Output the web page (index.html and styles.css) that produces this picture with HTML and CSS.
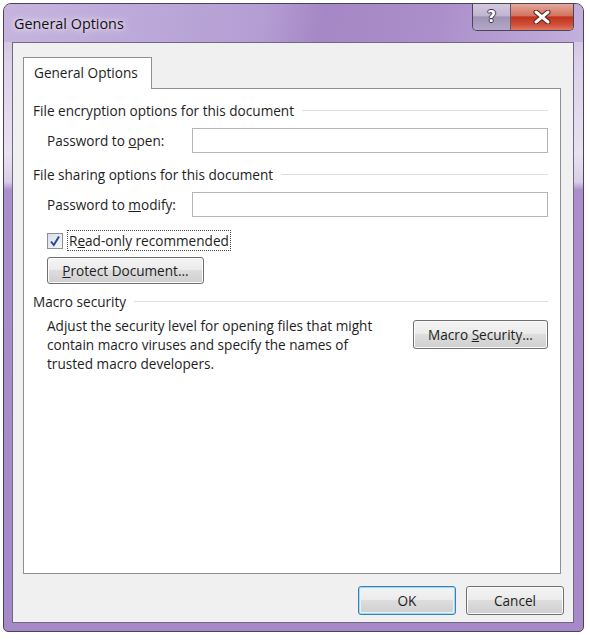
FILE: index.html
```html
<!DOCTYPE html>
<html lang="en">
<head>
    <meta charset="UTF-8">
    <title>General Options</title>
    <link rel="stylesheet" href="styles.css">
</head>
<body>
    <div class="window">
        <div class="titlebar">
            <span class="title">General Options</span>
            <div class="caption-buttons">
                <span class="cap-btn help-btn">?</span>
                <span class="cap-btn close-btn">
                    <svg width="18" height="14" viewBox="0 0 18 14">
                        <path d="M3 2 L15 12 M15 2 L3 12" stroke="#5a1a14" stroke-width="5" stroke-linecap="round"/>
                        <path d="M3 2 L15 12 M15 2 L3 12" stroke="#ffffff" stroke-width="3" stroke-linecap="round"/>
                    </svg>
                </span>
            </div>
        </div>
        <div class="client">
            <div class="tabs">
                <div class="tab">General Options</div>
            </div>
            <div class="panel">
                <div class="group-title"><span>File encryption options for this document</span></div>
                <div class="field">
                    <label class="field-label">Password to <u>o</u>pen:</label>
                    <div class="text-input"></div>
                </div>

                <div class="group-title second"><span>File sharing options for this document</span></div>
                <div class="field">
                    <label class="field-label">Password to <u>m</u>odify:</label>
                    <div class="text-input"></div>
                </div>
                <div class="check-row">
                    <span class="checkbox">
                        <svg width="12" height="12" viewBox="0 0 12 12">
                            <path d="M2 6.5 L4.8 10 L10 1.5" fill="none" stroke="#2a4a9c" stroke-width="2"/>
                        </svg>
                    </span>
                    <span class="check-label">R<u>e</u>ad-only recommended</span>
                </div>
                <button class="btn protect-btn"><u>P</u>rotect Document...</button>

                <div class="group-title third"><span>Macro security</span></div>
                <div class="macro-row">
                    <p class="macro-text">Adjust the security level for opening files that might<br>contain macro viruses and specify the names of<br>trusted macro developers.</p>
                    <button class="btn macro-btn">Macro <u>S</u>ecurity...</button>
                </div>
            </div>
            <div class="footer">
                <button class="btn ok-btn">OK</button>
                <button class="btn">Cancel</button>
            </div>
        </div>
    </div>
</body>
</html>
```

FILE: styles.css
```css
* {
    box-sizing: border-box;
}

body {
    margin: 0;
    padding: 3px;
    background: #ffffff;
    font-family: "Open Sans", "Noto Sans", sans-serif;
    font-size: 13.6px;
    color: #1e1e1e;
}

.window {
    width: 581px;
    height: 629px;
    border: 1px solid #474556;
    border-radius: 8px 8px 5px 5px;
    background: linear-gradient(to bottom, #c7b6df 0, #dcd1ea 60px, #e8e1f1 150px, #d9cde8 178px, #aa8fcc 186px, #a689c8 100%);
    display: flex;
    flex-direction: column;
    overflow: hidden;
}

.titlebar {
    flex-shrink: 0;
    height: 38px;
    display: flex;
    align-items: flex-start;
    justify-content: space-between;
    background: linear-gradient(100deg, #c6b4de 0%, #bca8d8 25%, #b49dd3 45%, #a487c4 55%, #ab8fca 75%, #c3b0dc 100%);
}

.title {
    margin: 10px 0 0 10px;
    font-size: 14.4px;
    color: #111111;
    text-shadow: 0 0 8px #efe8f6, 0 0 4px #efe8f6;
}

.caption-buttons {
    display: flex;
    margin-right: 9px;
    border: 1px solid #4a4458;
    border-top: none;
    border-radius: 0 0 5px 5px;
    overflow: hidden;
}

.cap-btn {
    height: 26px;
    display: flex;
    align-items: center;
    justify-content: center;
}

.help-btn {
    width: 38px;
    border-right: 1px solid #5e566e;
    background: linear-gradient(to bottom, #d4cadf 0, #c0b4cf 45%, #a094b6 50%, #b4a8c8 100%);
    color: #ffffff;
    font-family: "DejaVu Sans", sans-serif;
    font-weight: bold;
    font-size: 15px;
    text-shadow: 1px 0 0 #3c3350, -1px 0 0 #3c3350, 0 1px 0 #3c3350, 0 -1px 0 #3c3350;
}

.close-btn {
    width: 62px;
    background: linear-gradient(to bottom, #e4a89c 0, #d2735f 45%, #c0321c 50%, #d0503a 80%, #e07a5e 100%);
}

.client {
    flex: 1;
    margin: 0 9px 8px 8px;
    border: 1px solid #6f6a80;
    background: #f0f0f0;
    display: flex;
    flex-direction: column;
    padding: 14px 0 0 10px;
}

.tabs {
    display: flex;
}

.tab {
    width: 129px;
    height: 32px;
    padding-left: 10px;
    line-height: 30px;
    border: 1px solid #8d8f96;
    border-bottom: none;
    background: #ffffff;
    margin-bottom: -1px;
    position: relative;
}

.panel {
    height: 486px;
    margin-right: 12px;
    border: 1px solid #8d8f96;
    background: #ffffff;
    padding: 11px 12px 0 9px;
}

.group-title {
    display: flex;
    align-items: center;
    height: 20px;
}

.group-title::after {
    content: "";
    flex: 1;
    height: 1px;
    margin-left: 8px;
    background: #dcdfe3;
}

.group-title.second {
    margin-top: 11px;
}

.group-title.third {
    margin-top: 7px;
}

.field {
    display: flex;
    align-items: center;
    margin: 8px 0 0 14px;
}

.field-label {
    width: 145px;
}

.text-input {
    flex: 1;
    height: 25px;
    border: 1px solid #b4b6bb;
    background: #ffffff;
}

.check-row {
    display: flex;
    align-items: center;
    margin: 13px 0 0 14px;
    height: 21px;
}

.checkbox {
    width: 16px;
    height: 16px;
    border: 1px solid #8e8f8f;
    background: linear-gradient(135deg, #dcdfe6 0%, #f4f6f9 100%);
    display: flex;
    align-items: center;
    justify-content: center;
}

.check-label {
    margin-left: 4px;
    padding: 0 1px;
    line-height: 19px;
    border: 1px dotted #4a4a4a;
}

.btn {
    font-family: inherit;
    font-size: inherit;
    color: #1e1e1e;
    height: 28px;
    padding: 0 10px;
    border: 1px solid #707070;
    border-radius: 3px;
    background: linear-gradient(to bottom, #f4f4f4 0, #ebebeb 49%, #dddddd 50%, #cfcfcf 100%);
    box-shadow: inset 0 0 0 1px #fbfbfb;
}

.protect-btn {
    display: block;
    width: 157px;
    height: 27px;
    margin: 6px 0 0 14px;
}

.macro-row {
    display: flex;
    align-items: flex-start;
    justify-content: space-between;
    margin: 5px 0 0 14px;
}

.macro-text {
    margin: 0;
    line-height: 19px;
}

.macro-btn {
    width: 135px;
    height: 29px;
    margin-top: 4px;
}

.footer {
    display: flex;
    justify-content: flex-end;
    gap: 10px;
    margin-top: 12px;
    padding-right: 9px;
}

.footer .btn {
    width: 98px;
    height: 29px;
}

.ok-btn {
    border-color: #3c7fb1;
    box-shadow: inset 0 0 0 1px #a4d8f0, inset 0 0 0 2px #e3f4fc;
}
```
